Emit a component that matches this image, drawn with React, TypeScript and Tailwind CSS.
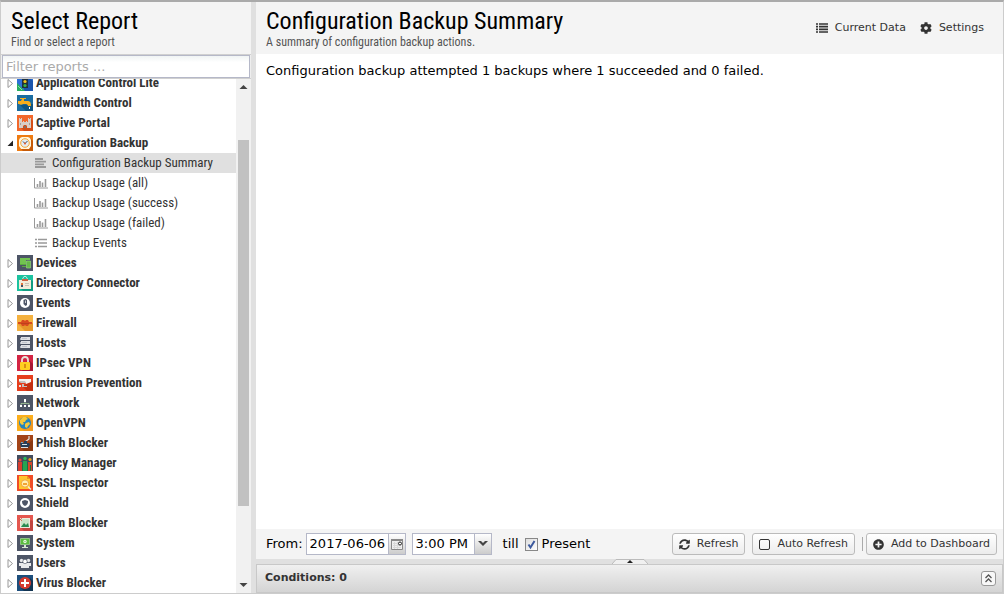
import { useState } from "react"
import type { ReactNode } from "react"
import { FaCog, FaPlusCircle, FaSyncAlt } from "react-icons/fa"

const condensed = "font-['Roboto_Condensed','Liberation_Sans_Narrow',Roboto,sans-serif]"

const art: Record<string, ReactNode> = {
  application: (
    <>
      <path fill="#2d6fd8" d="M0 0h16v16H0z" />
      <path fill="#1c56ad" d="M5 1h6l5 5v10H7z" />
      <path fill="#20303b" d="M5 0h6v13H5z" />
      <circle cx="8" cy="2.5" r="1.6" fill="#e53a2c" />
      <circle cx="8" cy="6.5" r="1.6" fill="#f3c41f" />
      <circle cx="8" cy="10.500" r="1.6" fill="#37b348" />
      <path fill="#27ae60" d="M0 8l8 8H0z" />
      <path stroke="#b6e8c8" strokeWidth=".7" d="M1 11l4 4" />
    </>
  ),
  bandwidth: (
    <>
      <path fill="#1b6ca0" d="M0 0h16v16H0z" />
      <path fill="#12547f" d="M3 10l6 6h7V9z" />
      <path fill="#f9ad1b" d="M3 3h6v1H7v2h3c3 0 4 1 4 5h-3c0-1-1-2-2-2H6c-1 1-3 1-4 0H1V6h3c0-1 1-1 1-2H3z" />
      <path fill="#fff" d="M12 12h1v2h-1z" />
    </>
  ),
  captive: (
    <>
      <path fill="#f2672a" d="M0 0h16v16H0z" />
      <path fill="#d44f18" d="M4 13l3 3h9V6l-2-2z" />
      <path fill="#d8cfc8" d="M2 3h1v1h1V3h1v4h1V6h1v1h2V6h1v1h1V3h1v1h1V3h1v10h-4v-2l-1-1h-2l-1 1v2H2z" />
      <path fill="#a59c98" d="M3 8h1v2H3zM12 8h1v2h-1z" />
      <path fill="#77706e" d="M7 11h2v2H7z" />
    </>
  ),
  backup: (
    <>
      <path fill="#ee7b12" d="M0 0h16v16H0z" />
      <path fill="#c65b09" d="M3 13l3 3h10V6l-3-3z" />
      <path fill="#fff5dc" d="M3 3l2-1h6l2 1 1 2v6l-2 3H4l-2-3V5z" />
      <circle cx="8" cy="8" r="4.3" fill="#e3ecf2" stroke="#f4a637" />
      <path fill="none" stroke="#34495e" d="M6 6.500l2 2 2.500-2.500" />
      <circle cx="8" cy="8.500" r="1" fill="#e95a24" />
    </>
  ),
  devices: (
    <>
      <path fill="#4d5566" d="M0 0h16v16H0z" />
      <path fill="#72c350" d="M3 3h10v2H9v5H3z" />
      <path fill="#5aaa3f" d="M3 9h6v1H3zM5 11h4v1H5z" />
      <path fill="#65b947" stroke="#9bdb7f" strokeWidth=".6" d="M9.500 6h4v7h-4z" />
    </>
  ),
  directory: (
    <>
      <path fill="#1cc29f" d="M0 0h16v16H0z" />
      <path fill="#129c82" d="M3 13l3 3h10V6l-2-1z" />
      <path fill="#f4ecd9" d="M2 5h12v9H2z" />
      <path fill="none" stroke="#dff4ef" strokeWidth=".8" d="M5.500 4L7 1.500h2L10.500 4" />
      <path fill="#cf6040" d="M5 4h6v2H5z" />
      <path fill="#e3763e" d="M4 8h2v2H4z" />
      <path stroke="#c7c1b3" d="M8 8.500h4M8 10.500h4" />
      <path fill="#3f5368" d="M4 10h2v2H4z" />
    </>
  ),
  events: (
    <>
      <path fill="#4d5566" d="M0 0h16v16H0z" />
      <circle cx="8" cy="8" r="5" fill="#fff" />
      <path fill="#4d5566" d="M6.500 5l2-1L10 5v5l-1.500 1-2-2z" />
      <path fill="#fff" d="M8 5.500h.7V8H8z" />
    </>
  ),
  firewall: (
    <>
      <path fill="#f4b13f" d="M0 0h16v16H0z" />
      <path fill="#e6962a" d="M1 9l7 7h8V8z" />
      <path fill="#d84a20" d="M1 7h3l1-2h2l1 1 1-1h2l1 2h3v2h-3l-1 2H9l-1-1-1 1H5L4 9H1z" />
      <path stroke="#b53f1b" strokeWidth=".8" d="M4 8.500h8" />
    </>
  ),
  hosts: (
    <>
      <path fill="#4d5566" d="M0 0h16v16H0z" />
      <path fill="#dfe1e5" d="M4 2h9v3H4zM4 6h9v3H4zM4 10h9v3H4z" />
      <path stroke="#adb2bc" strokeWidth=".6" d="M5 3.500h5M5 7.500h5M5 11.500h5" />
      <path fill="#aeb3bd" d="M3 3h1v2H3zM3 7h1v2H3zM3 11h1v2H3z" />
    </>
  ),
  ipsec: (
    <>
      <path fill="#d32443" d="M0 0h16v16H0z" />
      <path fill="#a91733" d="M11 4l5 5v7H5z" />
      <path fill="none" stroke="#e7e3d9" strokeWidth="1.800" d="M5 8V5c0-4 6-4 6 0v3" />
      <rect x="3" y="7" width="10" height="8" rx="1" fill="#ffcf20" />
      <path fill="#d98d15" d="M7 9h2v4H7z" />
    </>
  ),
  intrusion: (
    <>
      <path fill="#e63e1d" d="M0 0h16v16H0z" />
      <path fill="#c5300f" d="M5 11l5 5h6V6z" />
      <path fill="#f5f2ee" d="M2 4h12v3l-5 2-1-2H2z" />
      <path fill="#c3c0bd" d="M2 6h6l1 2H4L2 7zM5 9h2v2h3v1H5z" />
      <path fill="#e9dedb" d="M2 10h2v2H2z" />
    </>
  ),
  network: (
    <>
      <path fill="#4d5566" d="M0 0h16v16H0z" />
      <path fill="none" stroke="#a5c99b" strokeWidth=".8" d="M8 6v3M4 11V8.500h8V11" />
      <path fill="#fff" d="M7 4h2v3H7zM3 10h2v2H3zM7 10h2v2H7zM11 10h2v2h-2z" />
    </>
  ),
  openvpn: (
    <>
      <path fill="#fbae1c" d="M0 0h16v16H0z" />
      <path fill="#f19a22" d="M4 13l3 3h9V6l-3-3z" />
      <circle cx="8" cy="8" r="6" fill="#2385bd" />
      <path fill="#f5c93c" d="M3 5l3-3h3l2 2-2 1-1 2H6l1 2-2 1-2-2zM9 8l3-1 1 2-2 2-1 2-2-1V9z" />
    </>
  ),
  phish: (
    <>
      <path fill="#a34418" d="M0 0h16v16H0z" />
      <path fill="#8a3911" d="M4 13l3 3h9V5z" />
      <path fill="none" stroke="#e0e1df" strokeWidth="1.200" d="M12 1v3L8 7v2" />
      <path fill="#253f58" d="M3 8h9l1 2-2 3H4zM7 6h3v2H7z" />
      <path fill="#d8e1e5" d="M5 9h5v1H5zM4 12h7v1H4z" />
      <path stroke="#78a8c0" d="M4 7.500h2" />
    </>
  ),
  policy: (
    <>
      <path fill="#424b5d" d="M0 0h16v16H0z" />
      <path fill="#d73d2f" d="M1 7h4v9H1z" />
      <path fill="#27a451" d="M6 6h4v10H6z" />
      <path fill="#d5462c" d="M11 7h4v9h-4z" />
      <circle cx="3" cy="5" r="1.600" fill="#e84a36" />
      <circle cx="8" cy="3.500" r="1.700" fill="#2eba5a" />
      <circle cx="13" cy="4.500" r="1.600" fill="#e9a51b" />
      <path fill="#1c7340" d="M5 9h1v7H5zM10 9h1v7h-1zM13 10h1v6h-1z" />
    </>
  ),
  ssl: (
    <>
      <path fill="#f04d26" d="M0 0h16v16H0z" />
      <path fill="#ffc52e" d="M2 1h8l3 3v10H2z" />
      <path fill="#e99622" d="M10 1l3 3h-3z" />
      <circle cx="8" cy="8.500" r="3.700" fill="#fff0b4" stroke="#f1a23c" />
      <path fill="#f2a334" d="M6 8h4v2H6z" />
      <path stroke="#f5ead2" strokeWidth="1.500" d="M11 11.500l3 3" />
    </>
  ),
  shield: (
    <>
      <path fill="#4d5566" d="M0 0h16v16H0z" />
      <circle cx="8" cy="8" r="5" fill="#fff" />
      <path fill="#4d5566" d="M5 6l3-1 3 1c0 3-1 4-3 5-2-1-3-2-3-5z" />
    </>
  ),
  spam: (
    <>
      <path fill="#e4574f" d="M0 0h16v16H0z" />
      <path fill="#c2463f" d="M4 13l3 3h9V6l-2-1z" />
      <path fill="#eee9dd" d="M3 3h10v10H3z" />
      <path fill="#c9e4c6" d="M4 4h8v8H4z" />
      <path fill="#278b52" d="M4 12l3-4 2 2 2-2 1 4z" />
      <path stroke="#cf5542" strokeWidth=".8" d="M2 3l3 3M5 3L2 6" />
    </>
  ),
  system: (
    <>
      <path fill="#4d5566" d="M0 0h16v16H0z" />
      <path fill="#59bc3e" stroke="#a9dc9b" strokeWidth=".7" d="M3.500 3.500h9v6h-9z" />
      <circle cx="8" cy="6.500" r="1.700" fill="#e4f4df" />
      <circle cx="8" cy="6.500" r=".6" fill="#59bc3e" />
      <path fill="#d6e8d2" d="M7 10h2v2H7zM5 12h6v1H5z" />
    </>
  ),
  users: (
    <>
      <path fill="#4d5566" d="M0 0h16v16H0z" />
      <circle cx="4.500" cy="5.500" r="1.700" fill="#e9eaec" />
      <circle cx="11.500" cy="5.500" r="1.700" fill="#e9eaec" />
      <path fill="#e9eaec" d="M2 8h12v3h-2v2H4v-2H2z" />
      <circle cx="8" cy="6.500" r="2.200" fill="#fff" stroke="#4d5566" strokeWidth=".6" />
    </>
  ),
  virus: (
    <>
      <path fill="#1d4e7c" d="M0 0h16v16H0z" />
      <path fill="#123452" d="M4 13l3 3h9V6l-3-3z" />
      <circle cx="8" cy="8" r="6" fill="#d53a2e" />
      <path fill="#fff" d="M7 4h2v3h3v2H9v3H7V9H4V7h3z" />
    </>
  ),
}

const before = [
  ["application", "Application Control Lite"],
  ["bandwidth", "Bandwidth Control"],
  ["captive", "Captive Portal"],
]

const reports = [
  ["text", "Configuration Backup Summary"],
  ["chart", "Backup Usage (all)"],
  ["chart", "Backup Usage (success)"],
  ["chart", "Backup Usage (failed)"],
  ["list", "Backup Events"],
]

const after = [
  ["devices", "Devices"],
  ["directory", "Directory Connector"],
  ["events", "Events"],
  ["firewall", "Firewall"],
  ["hosts", "Hosts"],
  ["ipsec", "IPsec VPN"],
  ["intrusion", "Intrusion Prevention"],
  ["network", "Network"],
  ["openvpn", "OpenVPN"],
  ["phish", "Phish Blocker"],
  ["policy", "Policy Manager"],
  ["ssl", "SSL Inspector"],
  ["shield", "Shield"],
  ["spam", "Spam Blocker"],
  ["system", "System"],
  ["users", "Users"],
  ["virus", "Virus Blocker"],
]

function Category({ icon, label, open }: { icon: string; label: string; open?: boolean }) {
  return (
    <li className="flex h-5 shrink-0 items-center pl-1">
      <svg className="size-3 shrink-0" viewBox="0 0 12 12">
        {open ? (
          <path fill="#222" d="M8 3.500V9H2.500z" />
        ) : (
          <path fill="#fff" stroke="#999" d="M3 2.500v8l4.500-4z" />
        )}
      </svg>
      <svg className="size-4 shrink-0" viewBox="0 0 16 16">{art[icon]}</svg>
      <span className="pl-[3px] text-[13px] font-bold whitespace-nowrap">{label}</span>
    </li>
  )
}

function ReportIcon({ kind }: { kind: string }) {
  return (
    <svg className="h-3 w-[14px] shrink-0" viewBox="0 0 14 12" fill="none" stroke="#999">
      {kind === "text" && <path strokeWidth="1.800" d="M1 2h8M1 4.700h11M1 7.400h9M1 10h11" />}
      {kind === "chart" && (
        <>
          <path d="M.5 1v10H14" />
          <path strokeWidth="1.600" d="M3.500 10V7M6 10V4M8.500 10V5.500M11.500 10V2" />
        </>
      )}
      {kind === "list" && <path strokeWidth="1.700" d="M1 2.500h2M4 2.500h9M1 6h2M4 6h9M1 9.500h2M4 9.500h9" />}
    </svg>
  )
}

function ToolButton({ children }: { children: ReactNode }) {
  return (
    <button className="flex h-[22px] items-center gap-[7px] rounded-[3px] border border-[#bbb] bg-linear-to-b from-white to-[#ececec] px-1.5 text-[11px] whitespace-nowrap text-[#333]">
      {children}
    </button>
  )
}

export default function App() {
  const [present, setPresent] = useState(true)

  return (
    <div className="flex h-screen overflow-hidden border border-t-2 border-[#ccc] border-t-[#aaa] bg-[#e0e0e0] font-['DejaVu_Sans',sans-serif] text-[13px] text-black">
      <aside className={`flex w-[250px] shrink-0 flex-col bg-white text-[#333] ${condensed}`}>
        <header className="h-[52px] shrink-0 bg-[#f4f4f4] px-2.5 pt-1">
          <h1 className="text-2xl leading-[30px] text-black">Select Report</h1>
          <p className="text-xs leading-3 text-[#555]">Find or select a report</p>
        </header>
        <div className="shrink-0 border-y border-[#d0d0d0] bg-[#eee] px-px">
          <input
            aria-label="Filter reports"
            placeholder="Filter reports ..."
            className="block h-[23px] w-full border border-[#b5b8c8] bg-linear-to-b from-[#f0f4f4] to-white to-30% px-[3px] font-['DejaVu_Sans',sans-serif] text-[13px] outline-none placeholder:text-[#aaa]"
          />
        </div>
        <div className="flex min-h-0 flex-1">
          <ul className="flex min-w-0 flex-1 flex-col justify-end overflow-hidden">
            {before.map(([icon, label]) => <Category key={label} icon={icon} label={label} />)}
            <Category icon="backup" label="Configuration Backup" open />
            {reports.map(([kind, label], i) => (
              <li key={label} className={`flex h-5 shrink-0 items-center gap-1 pl-[33px] text-[13px] whitespace-nowrap ${i === 0 ? "bg-[#e0e0e0]" : ""}`}>
                <ReportIcon kind={kind} />
                {label}
              </li>
            ))}
            {after.map(([icon, label]) => <Category key={label} icon={icon} label={label} />)}
          </ul>
          <div className="flex w-[15px] flex-col items-center bg-[#f1f1f1]">
            <svg className="h-4 w-[15px]" viewBox="0 0 15 16"><path fill="#444" d="M7.500 6l4 4h-8z" /></svg>
            <div className="grow-[45]" />
            <div className="w-[11px] grow-[366] bg-[#c1c1c1]" />
            <div className="grow-[71]" />
            <svg className="h-4 w-[15px]" viewBox="0 0 15 16"><path fill="#444" d="M7.500 10l4-4h-8z" /></svg>
          </div>
        </div>
      </aside>

      <main className="ml-[5px] flex min-w-0 flex-1 flex-col">
        <header className="flex h-[52px] shrink-0 justify-between bg-[#f4f4f4] pr-[19px] pl-2.5">
          <div className={`pt-1 ${condensed}`}>
            <h2 className="text-2xl leading-[30px]">Configuration Backup Summary</h2>
            <p className="text-xs leading-3 text-[#555]">A summary of configuration backup actions.</p>
          </div>
          <div className="flex items-center gap-3.5 text-[11px] text-[#333]">
            <button className="flex items-center gap-[7px]">
              <svg className="h-3 w-3" viewBox="0 0 12 12"><path stroke="#333" strokeWidth="1.700" d="M0 2h2M3 2h9M0 4.700h2M3 4.700h9M0 7.400h2M3 7.400h9M0 10h2M3 10h9" /></svg>
              Current Data
            </button>
            <button className="flex items-center gap-[7px]"><FaCog className="size-3" />Settings</button>
          </div>
        </header>
        <section className="min-h-0 flex-1 bg-white px-2.5 py-2 leading-[18px]">
          Configuration backup attempted 1 backups where 1 succeeded and 0 failed.
        </section>

        <div className="flex h-[30px] shrink-0 items-center bg-[#f4f4f4] pr-1.5 pl-2.5">
          <label htmlFor="from">From:</label>
          <div className="ml-[3px] flex h-[22px] border border-[#b5b8c8] bg-white">
            <input id="from" defaultValue="2017-06-06" className="w-[81px] px-[3px] outline-none" />
            <button aria-label="Pick a date" className="w-[17px] border-l border-[#b5b8c8] bg-linear-to-b from-white to-[#ccc]">
              <svg className="size-4" viewBox="0 0 16 16">
                <path fill="#eee" stroke="#888" d="M2.500 3.500h11v10h-11z" />
                <path fill="#888" d="M2 3h12v2H2z" />
                <path stroke="#d8d8d8" d="M4 7.500h8M4 9.500h8M4 11.500h8M5.500 6v7M8.500 6v7" />
                <circle cx="11" cy="7.500" r="1.500" fill="#fff" stroke="#222" />
              </svg>
            </button>
          </div>
          <div className="relative ml-1.5 flex h-[22px] border border-[#b5b8c8] bg-white">
            <select aria-label="Start time" className="w-[78px] appearance-none px-[3px] outline-none">
              <option>3:00 PM</option>
            </select>
            <span className="pointer-events-none absolute inset-y-0 right-0 flex w-[17px] items-center justify-center border-l border-[#b5b8c8] bg-linear-to-b from-white to-[#ccc]">
              <svg className="h-2 w-2.5" viewBox="0 0 10 8"><path fill="#444" d="M0 1h3l2 2 2-2h3L5 6z" /></svg>
            </span>
          </div>
          <span className="ml-[11px]">till</span>
          <label className="ml-1.5 flex items-center gap-1">
            <span className="relative size-[13px]">
              <input
                type="checkbox"
                checked={present}
                onChange={e => setPresent(e.target.checked)}
                className="block size-[13px] appearance-none border border-[#888] bg-linear-to-br from-[#ddd] to-white"
              />
              {present && (
                <svg className="pointer-events-none absolute inset-0" viewBox="0 0 13 13">
                  <path fill="none" stroke="#3d5a9e" strokeWidth="2" d="M3.500 6.500l2 3L9.500 3" />
                </svg>
              )}
            </span>
            Present
          </label>
          <div className="ml-auto flex items-center">
            <ToolButton><FaSyncAlt className="size-[11px]" />Refresh</ToolButton>
            <div className="w-[7px]" />
            <ToolButton>
              <svg className="size-[11px]" viewBox="0 0 11 11"><rect x=".5" y=".5" width="10" height="10" rx="1.500" fill="none" stroke="#333" /></svg>
              Auto Refresh
            </ToolButton>
            <div className="mr-[3px] ml-[7px] h-3.5 w-px bg-[#aaa]" />
            <ToolButton><FaPlusCircle className="size-[11px]" />Add to Dashboard</ToolButton>
          </div>
        </div>

        <button aria-label="Expand conditions" className="flex h-[5px] shrink-0 justify-center">
          <svg className="h-[5px] w-9" viewBox="0 0 36 5">
            <path fill="#f0f0f0" stroke="#bbb" d="M0 5L4 .5h28L36 5" />
            <path fill="#222" d="M18 1l3 3h-6z" />
          </svg>
        </button>
        <footer className="flex h-[29px] shrink-0 items-center justify-between border border-[#c8c8c8] bg-linear-to-b from-[#f0f0f0] to-[#d4d4d4] pr-1.5 pl-2 text-[11px] font-bold text-[#333]">
          Conditions: 0
          <button aria-label="Expand" className="size-[15px] rounded-[3px] border border-[#999] bg-[#f8f8f8]">
            <svg className="size-[13px]" viewBox="0 0 13 13"><path fill="none" stroke="#555" strokeWidth="1.300" d="M3.500 6l3-3 3 3M3.500 10l3-3 3 3" /></svg>
          </button>
        </footer>
      </main>
    </div>
  )
}
